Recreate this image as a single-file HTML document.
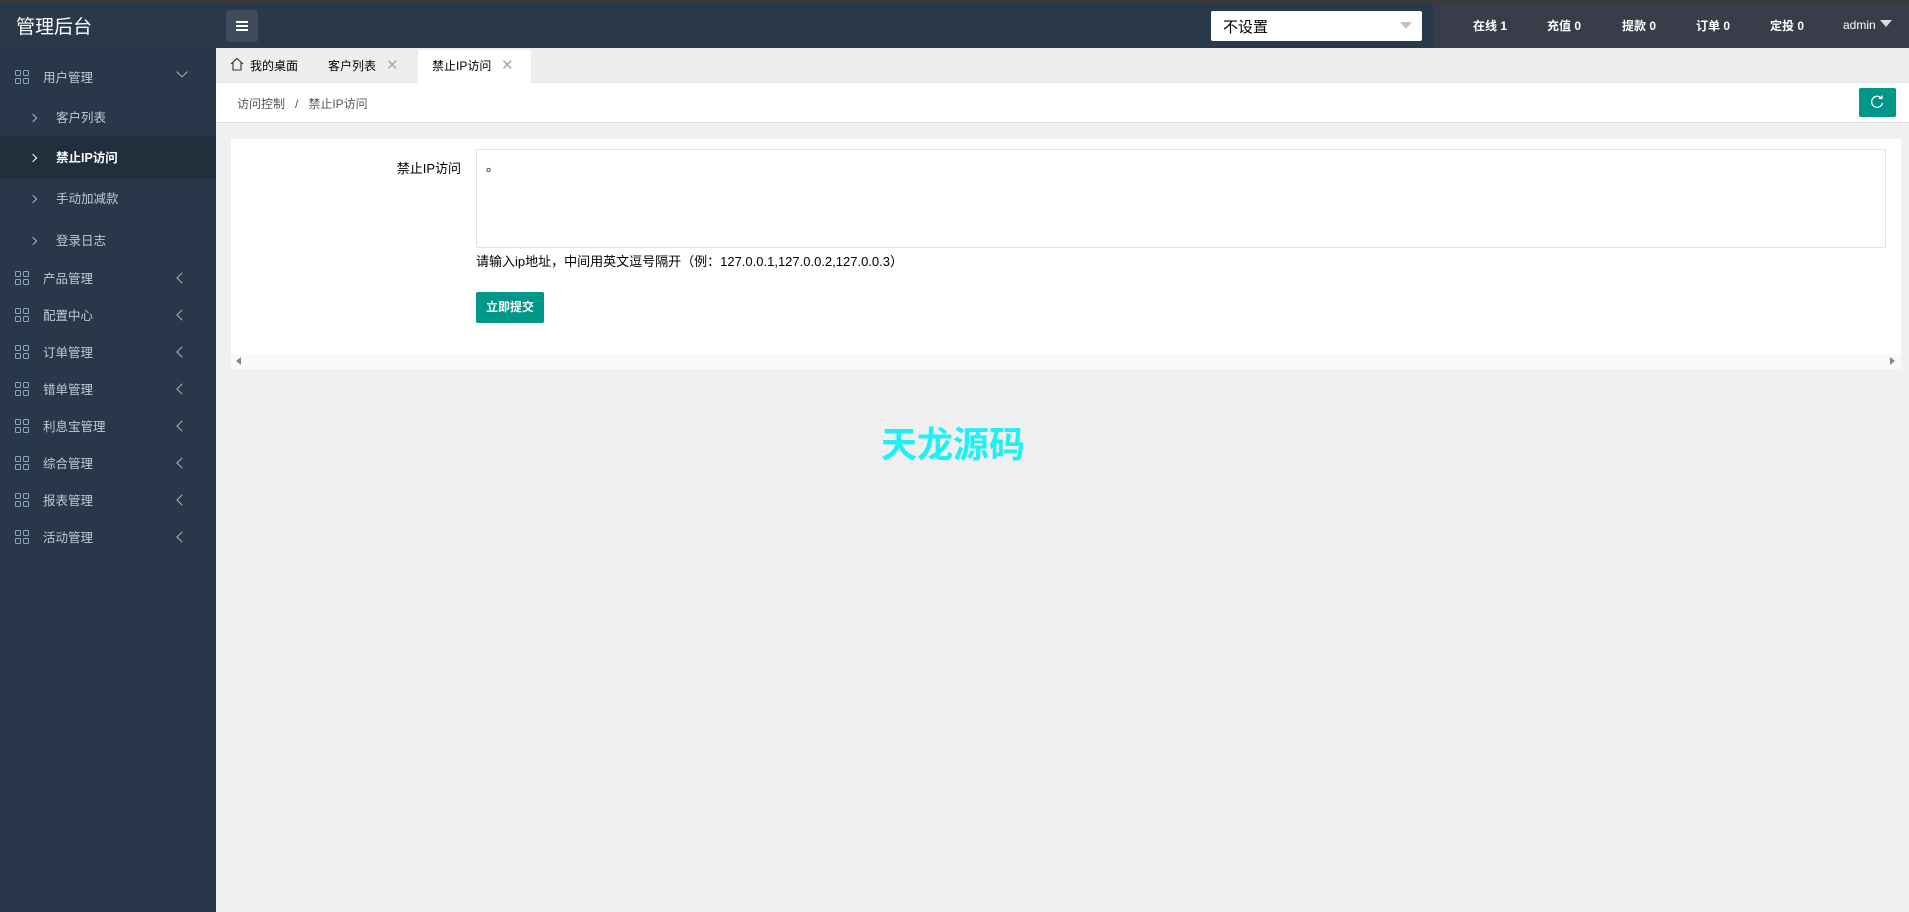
<!DOCTYPE html>
<html><head><meta charset="utf-8"><style>
*{margin:0;padding:0;box-sizing:border-box}
body{width:1909px;height:912px;overflow:hidden;background:#f0f0f0;font-family:"Liberation Sans","Noto Sans CJK SC",sans-serif;position:relative;font-size:13px}
.a{position:absolute}
.top{left:0;top:0;width:1909px;height:3px;background:#3a3a3a}
.hdr{left:0;top:3px;width:1909px;height:45px;background:#29394a}
.side{left:0;top:48px;width:216px;height:864px;background:#28384a}
.logo{left:16px;top:12px;color:#fff;font-size:19px}
.mbtn{left:226px;top:10px;width:32px;height:32px;background:#3e4c5c;border-radius:3px}
.mbtn i{position:absolute;left:10px;width:12px;height:1.5px;background:#fff}
.sel{left:1211px;top:11px;width:211px;height:30px;background:#fff;border-radius:2px;font-size:15px;color:#000;padding:5px 0 0 12px}
.sel:after{content:"";position:absolute;right:10px;top:11px;border:6px solid transparent;border-top:7px solid #c2c2c2}
.rt{left:1433px;top:3px;width:476px;height:45px;background:#393d49}
.st{top:17px;color:#fff;font-size:12px;font-weight:bold;transform:translateX(-50%);white-space:nowrap}
.mi{left:0;width:216px;height:37px;color:#c2c8d0;font-size:12.5px}
.mi span.t{position:absolute;left:43px;top:8px}
.ic{position:absolute;left:15px;top:11px;width:14px;height:14px}
.ic b{position:absolute;width:6px;height:6px;border:1.3px solid #8fa4bd;border-radius:1.5px}
.ch{position:absolute;left:178px;top:14px;width:8px;height:8px;border-left:1.3px solid #aab4c0;border-bottom:1.3px solid #aab4c0;transform:rotate(45deg)}
.sub{left:0;width:216px;height:41px;color:#c2c8d0;font-size:12.5px}
.sub .t{position:absolute;left:56px;top:11px}
.sub .c{position:absolute;left:30px;top:19px;width:6px;height:6px;border-right:1.3px solid #aab4c0;border-top:1.3px solid #aab4c0;transform:rotate(45deg)}
.tabs{left:216px;top:48px;width:1693px;height:35px;background:#eeeef0;border-bottom:1px solid #e2e2e2}
.tab{top:0;height:35px;font-size:12px;color:#000;padding-top:9px}
.x{color:#aaa;font-size:15px;position:absolute;top:7px}
.bc{left:216px;top:83px;width:1693px;height:40px;background:#fff;border-bottom:1px solid #e2e2e2;font-size:12px;color:#555}
.card{left:231px;top:139px;width:1670px;height:230px;background:#fff}
</style></head><body>
<div class="a top"></div>
<div class="a hdr"></div>
<div class="a side"></div>
<div class="a logo">管理后台</div>
<div class="a mbtn"><i style="top:11px"></i><i style="top:15px"></i><i style="top:19px"></i></div>
<div class="a sel">不设置</div>
<div class="a rt"></div>
<div class="a st" style="left:1490px">在线 1</div>
<div class="a st" style="left:1564px">充值 0</div>
<div class="a st" style="left:1639px">提款 0</div>
<div class="a st" style="left:1713px">订单 0</div>
<div class="a st" style="left:1787px">定投 0</div>
<div class="a st" style="left:1843px;font-weight:normal;transform:none;top:18px">admin</div>
<div class="a" style="left:1880px;top:20px;border:6px solid transparent;border-top:7px solid #ddd"></div>

<div class="a mi" style="top:59px"><div class="ic"><b style="left:0;top:0"></b><b style="left:8px;top:0"></b><b style="left:0;top:8px"></b><b style="left:8px;top:8px"></b></div><span class="t">用户管理</span><div class="ch" style="transform:rotate(-45deg);top:9px"></div></div>
<div class="a sub" style="top:96px"><div class="c"></div><span class="t">客户列表</span></div>
<div class="a sub" style="top:136px;background:#212e3b;color:#fff;font-weight:bold;height:42px"><div class="c" style="border-color:#fff"></div><span class="t">禁止IP访问</span></div>
<div class="a sub" style="top:177px"><div class="c"></div><span class="t">手动加减款</span></div>
<div class="a sub" style="top:219px"><div class="c"></div><span class="t">登录日志</span></div>

<div class="a mi" style="top:260px"><div class="ic"><b style="left:0;top:0"></b><b style="left:8px;top:0"></b><b style="left:0;top:8px"></b><b style="left:8px;top:8px"></b></div><span class="t">产品管理</span><div class="ch"></div></div>
<div class="a mi" style="top:297px"><div class="ic"><b style="left:0;top:0"></b><b style="left:8px;top:0"></b><b style="left:0;top:8px"></b><b style="left:8px;top:8px"></b></div><span class="t">配置中心</span><div class="ch"></div></div>
<div class="a mi" style="top:334px"><div class="ic"><b style="left:0;top:0"></b><b style="left:8px;top:0"></b><b style="left:0;top:8px"></b><b style="left:8px;top:8px"></b></div><span class="t">订单管理</span><div class="ch"></div></div>
<div class="a mi" style="top:371px"><div class="ic"><b style="left:0;top:0"></b><b style="left:8px;top:0"></b><b style="left:0;top:8px"></b><b style="left:8px;top:8px"></b></div><span class="t">错单管理</span><div class="ch"></div></div>
<div class="a mi" style="top:408px"><div class="ic"><b style="left:0;top:0"></b><b style="left:8px;top:0"></b><b style="left:0;top:8px"></b><b style="left:8px;top:8px"></b></div><span class="t">利息宝管理</span><div class="ch"></div></div>
<div class="a mi" style="top:445px"><div class="ic"><b style="left:0;top:0"></b><b style="left:8px;top:0"></b><b style="left:0;top:8px"></b><b style="left:8px;top:8px"></b></div><span class="t">综合管理</span><div class="ch"></div></div>
<div class="a mi" style="top:482px"><div class="ic"><b style="left:0;top:0"></b><b style="left:8px;top:0"></b><b style="left:0;top:8px"></b><b style="left:8px;top:8px"></b></div><span class="t">报表管理</span><div class="ch"></div></div>
<div class="a mi" style="top:519px"><div class="ic"><b style="left:0;top:0"></b><b style="left:8px;top:0"></b><b style="left:0;top:8px"></b><b style="left:8px;top:8px"></b></div><span class="t">活动管理</span><div class="ch"></div></div>

<div class="a tabs"></div>
<svg class="a" style="left:230px;top:57px" width="14" height="14" viewBox="0 0 14 14"><path d="M1 7 L7 1.5 L13 7 M3 5.5 V13 H11 V5.5" fill="none" stroke="#333" stroke-width="1.1"/></svg>
<div class="a tab" style="left:250px;top:48px">我的桌面</div>
<div class="a tab" style="left:328px;top:48px">客户列表</div>
<div class="a x" style="left:386px;top:56px">✕</div>
<div class="a" style="left:418px;top:50px;width:113px;height:34px;background:#fff"></div>
<div class="a tab" style="left:432px;top:48px">禁止IP访问</div>
<div class="a x" style="left:501px;top:56px">✕</div>
<div class="a bc"><span style="position:absolute;left:21px;top:12px">访问控制&nbsp;&nbsp;&nbsp;/&nbsp;&nbsp;&nbsp;禁止IP访问</span></div>
<div class="a" style="left:1859px;top:88px;width:37px;height:29px;background:#009688;border-radius:2px"></div>
<svg class="a" style="left:1869px;top:94px" width="17" height="17" viewBox="0 0 17 17"><path d="M12.5 4.5 A5.5 5.5 0 1 0 13.5 9" fill="none" stroke="#fff" stroke-width="1.3"/><path d="M10 4.5 H13 V1.5" fill="none" stroke="#fff" stroke-width="1.3"/></svg>

<div class="a card"></div>
<div class="a" style="left:380px;top:158px;width:81px;text-align:right;font-size:13px;color:#000">禁止IP访问</div>
<div class="a" style="left:476px;top:149px;width:1410px;height:99px;border:1px solid #e2e2e2;border-radius:2px;background:#fff"></div>
<div class="a" style="left:486px;top:156px;font-size:13px">。</div>
<div class="a" style="left:476px;top:251px;font-size:13px;color:#000">请输入ip地址，中间用英文逗号隔开（例：127.0.0.1,127.0.0.2,127.0.0.3）</div>
<div class="a" style="left:476px;top:292px;width:68px;height:31px;background:#009688;border-radius:2px;color:#fff;font-size:12px;font-weight:bold;text-align:center;line-height:31px">立即提交</div>
<div class="a" style="left:231px;top:354px;width:1670px;height:15px;background:#f9f9f9"></div>
<div class="a" style="left:236px;top:357px;border:4px solid transparent;border-right:5px solid #888;border-left:0"></div>
<div class="a" style="left:1890px;top:357px;border:4px solid transparent;border-left:5px solid #888;border-right:0"></div>

<div class="a" style="left:881px;top:416px;font-size:36px;font-weight:bold;color:#1ef0f5;font-family:'WenQuanYi Zen Hei','Noto Sans CJK SC',sans-serif">天龙源码</div>
</body></html>
